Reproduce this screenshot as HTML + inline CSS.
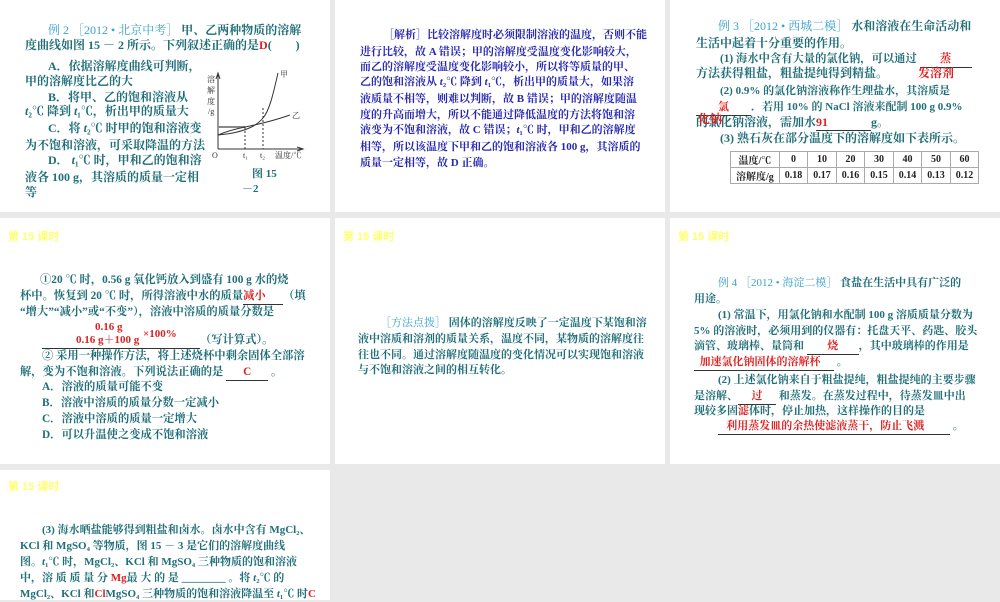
<!DOCTYPE html>
<html><head><meta charset="utf-8"><style>
body{margin:0;width:1000px;height:600px;background:#e9e9e9;position:relative;overflow:hidden;font-family:"Liberation Serif","Noto Serif CJK SC","Noto Sans CJK SC",serif;font-size:12px;}
.p{position:absolute;background:#fff;}
.l{position:absolute;white-space:nowrap;color:#1f6e78;line-height:16px;font-weight:bold}
.b{color:#3aa3cc;font-weight:normal}
.r{color:#d22;}
.e{color:#2828b0;}
.s{font-size:11px}
.m{font-size:11.3px}
.y{position:absolute;left:8px;color:#ffff70;font-family:"Liberation Sans","Noto Sans CJK SC",sans-serif;font-size:11px;font-weight:bold}
u{text-decoration:none;border-bottom:1px solid #333;display:inline-block;}
table{position:absolute;border-collapse:collapse;font-size:10px;font-weight:bold;color:#222}
td{border:1px solid #aaa;padding:0 5px;height:13px;text-align:center}
</style></head><body>
<div class="p" style="left:0;top:0;width:330px;height:212px">
<div class="l" style="left:48px;top:22px"><span class="b">例 2 ［2012 • 北京中考］</span> 甲、乙两种物质的溶解</div>
<div class="l" style="left:25px;top:37px">度曲线如图 15 － 2 所示。下列叙述正确的是<span class="r">D</span>(　　)</div>
<div class="l" style="left:48px;top:58px">A．依据溶解度曲线可判断，</div>
<div class="l" style="left:25px;top:73px">甲的溶解度比乙的大</div>
<div class="l" style="left:48px;top:89px">B．将甲、乙的饱和溶液从</div>
<div class="l" style="left:25px;top:103px"><i>t</i>₂℃ 降到 <i>t</i>₁℃，析出甲的质量大</div>
<div class="l" style="left:48px;top:120px">C．将 <i>t</i>₂℃ 时甲的饱和溶液变</div>
<div class="l" style="left:25px;top:137px">为不饱和溶液，可采取降温的方法</div>
<div class="l" style="left:48px;top:152px">D． <i>t</i>₁℃ 时，甲和乙的饱和溶</div>
<div class="l" style="left:25px;top:169px">液各 100 g，其溶质的质量一定相</div>
<div class="l" style="left:25px;top:184px">等</div>
<svg style="position:absolute;left:200px;top:60px" width="110" height="140" font-size="8" fill="#333">
<path d="M18 89V15M16 19L18 13L20 19M18 89H101M97 87L103 89L97 91" stroke="#333" fill="none"/>
<path d="M18 67H45" stroke="#888" stroke-width="2"/>
<path d="M18 75C40 73 55 68 63 58C70 50 74 30 78 13" stroke="#333" fill="none"/>
<path d="M18 75Q30 70 45 67Q70 62 90 55" stroke="#333" fill="none"/>
<path d="M45 67V89M63 48V89" stroke="#333" stroke-dasharray="2,2"/>
<text x="7" y="22">溶</text><text x="7" y="33">解</text><text x="7" y="44">度</text><text x="8" y="54">/g</text>
<text x="80" y="17">甲</text><text x="92" y="58">乙</text><text x="12" y="98">O</text><text x="43" y="98">t₁</text><text x="60" y="98">t₂</text><text x="75" y="98">温度/℃</text>
<text x="52" y="117" font-size="11" font-weight="bold" fill="#1f6e78">图 15</text><text x="42" y="132" font-size="11" font-weight="bold" fill="#1f6e78">－2</text>
</svg>
</div>
<div class="p" style="left:335px;top:0;width:330px;height:212px">
<div class="l e s" style="left:48px;top:27px">［解析］比较溶解度时必须限制溶液的温度，否则不能</div>
<div class="l e s" style="left:25px;top:44px">进行比较，故 A 错误；甲的溶解度受温度变化影响较大，</div>
<div class="l e s" style="left:25px;top:59px">而乙的溶解度受温度变化影响较小，所以将等质量的甲、</div>
<div class="l e s" style="left:25px;top:74px">乙的饱和溶液从 <i>t</i>₂℃ 降到 <i>t</i>₁℃，析出甲的质量大，如果溶</div>
<div class="l e s" style="left:25px;top:91px">液质量不相等，则难以判断，故 B 错误；甲的溶解度随温</div>
<div class="l e s" style="left:25px;top:107px">度的升高而增大，所以不能通过降低温度的方法将饱和溶</div>
<div class="l e s" style="left:25px;top:122px">液变为不饱和溶液，故 C 错误；<i>t</i>₁℃ 时，甲和乙的溶解度</div>
<div class="l e s" style="left:25px;top:139px">相等，所以该温度下甲和乙的饱和溶液各 100 g，其溶质的</div>
<div class="l e s" style="left:25px;top:155px">质量一定相等，故 D 正确。</div>
</div>
<div class="p" style="left:670px;top:0;width:330px;height:212px">
<div class="l" style="left:48px;top:18px"><span class="b">例 3 ［2012 • 西城二模］</span> 水和溶液在生命活动和</div>
<div class="l" style="left:26px;top:35px">生活中起着十分重要的作用。</div>
<div class="l m" style="left:50px;top:51px">(1) 海水中含有大量的氯化钠，可以通过 <u style="width:52px;text-align:center" class="r">蒸</u></div>
<div class="l" style="left:26px;top:65px">方法获得粗盐，粗盐提纯得到精盐。<span class="r" style="margin-left:30px">发溶剂</span></div>
<div class="l s" style="left:50px;top:83px">(2) 0.9% 的氯化钠溶液称作生理盐水，其溶质是</div>
<div class="l s" style="left:26px;top:99px"><u style="width:55px;text-align:center" class="r">氯</u>．若用 10% 的 NaCl 溶液来配制 100 g 0.9%</div>
<div class="l" style="left:26px;top:114px">的氯化钠溶液，需加水<u style="width:55px" class="r">91</u>g。</div>
<div class="l r" style="left:28px;top:111px">化钠</div>
<div class="l" style="left:50px;top:130px">(3) 熟石灰在部分温度下的溶解度如下表所示。</div>
<table style="left:60px;top:151px"><tr><td>温度/℃</td><td>0</td><td>10</td><td>20</td><td>30</td><td>40</td><td>50</td><td>60</td></tr><tr><td>溶解度/g</td><td>0.18</td><td>0.17</td><td>0.16</td><td>0.15</td><td>0.14</td><td>0.13</td><td>0.12</td></tr></table>
</div>
<div class="p" style="left:0;top:218px;width:330px;height:246px">
<div class="y" style="top:10px">第 15 课时</div>
<div class="l m" style="left:40px;top:54px">①20 ℃ 时，0.56 g 氧化钙放入到盛有 100 g 水的烧</div>
<div class="l m" style="left:20px;top:70px">杯中。恢复到 20 ℃ 时，所得溶液中水的质量<u style="width:40px" class="r">减小</u>（填</div>
<div class="l m" style="left:20px;top:86px">“增大”“减小”或“不变”），溶液中溶质的质量分数是</div>
<div class="l r" style="left:95px;top:101px;font-size:11px">0.16 g</div>
<div class="l r" style="left:143px;top:108px;font-size:11px">×100%</div>
<div class="l m" style="left:42px;top:114px"><u style="width:158px;position:relative"><b class="r" style="font-size:11px;margin-left:34px">0.16 g＋100 g</b></u>（写计算式）。</div>
<div class="l m" style="left:42px;top:130px">② 采用一种操作方法，将上述烧杯中剩余固体全部溶</div>
<div class="l m" style="left:20px;top:146px">解，变为不饱和溶液。下列说法正确的是 <u style="width:42px;text-align:center" class="r">C</u> 。</div>
<div class="l m" style="left:42px;top:161px">A．溶液的质量可能不变</div>
<div class="l m" style="left:42px;top:177px">B．溶液中溶质的质量分数一定减小</div>
<div class="l m" style="left:42px;top:193px">C．溶液中溶质的质量一定增大</div>
<div class="l m" style="left:42px;top:209px">D．可以升温使之变成不饱和溶液</div>
</div>
<div class="p" style="left:335px;top:218px;width:330px;height:246px">
<div class="y" style="top:10px">第 15 课时</div>
<div class="l s" style="left:45px;top:97px"><span class="b">［方法点拨］</span> 固体的溶解度反映了一定温度下某饱和溶</div>
<div class="l s" style="left:23px;top:113px">液中溶质和溶剂的质量关系，温度不同，某物质的溶解度往</div>
<div class="l s" style="left:23px;top:129px">往也不同。通过溶解度随温度的变化情况可以实现饱和溶液</div>
<div class="l s" style="left:23px;top:144px">与不饱和溶液之间的相互转化。</div>
</div>
<div class="p" style="left:670px;top:218px;width:330px;height:246px">
<div class="y" style="top:10px">第 15 课时</div>
<div class="l s" style="left:48px;top:57px"><span class="b">例 4 ［2012 • 海淀二模］</span> 食盐在生活中具有广泛的</div>
<div class="l s" style="left:24px;top:73px">用途。</div>
<div class="l s" style="left:48px;top:89px">(1) 常温下，用氯化钠和水配制 100 g 溶质质量分数为</div>
<div class="l s" style="left:24px;top:105px">5% 的溶液时，必须用到的仪器有：托盘天平、药匙、胶头</div>
<div class="l s" style="left:24px;top:120px">滴管、玻璃棒、量筒和 <u style="width:52px;text-align:center" class="r">烧</u>，其中玻璃棒的作用是</div>
<div class="l s" style="left:24px;top:136px"><u style="width:140px" class="r">&nbsp;&nbsp;加速氯化钠固体的溶解杯</u> 。</div>
<div class="l s" style="left:48px;top:154px">(2) 上述氯化钠来自于粗盐提纯，粗盐提纯的主要步骤</div>
<div class="l s" style="left:24px;top:170px">是溶解、<u style="width:38px;text-align:center" class="r">过</u> 和蒸发。在蒸发过程中，待蒸发皿中出</div>
<div class="l s" style="left:24px;top:185px">现较多固<span class="r">滤</span>体时，停止加热，这样操作的目的是</div>
<div class="l s" style="left:48px;top:200px"><u style="width:232px" class="r">&nbsp;&nbsp;&nbsp;利用蒸发皿的余热使滤液蒸干，防止飞溅</u> 。</div>
</div>
<div class="p" style="left:0;top:470px;width:330px;height:130px">
<div class="y" style="top:8px">第 15 课时</div>
<div class="l s" style="left:42px;top:52px">(3) 海水晒盐能够得到粗盐和卤水。卤水中含有 MgCl₂、</div>
<div class="l s" style="left:20px;top:68px">KCl 和 MgSO₄ 等物质，图 15 － 3 是它们的溶解度曲线</div>
<div class="l s" style="left:20px;top:84px">图。<i>t</i>₁℃ 时，MgCl₂、KCl 和 MgSO₄ 三种物质的饱和溶液</div>
<div class="l s" style="left:20px;top:100px">中，溶 质 质 量 分 <span class="r">Mg</span>最 大 的 是 ________ 。将 <i>t</i>₂℃ 的</div>
<div class="l s" style="left:20px;top:116px">MgCl₂、KCl 和<span class="r">Cl</span>MgSO₄ 三种物质的饱和溶液降温至 <i>t</i>₁℃ 时<span class="r">C</span></div>
</div>
</body></html>
